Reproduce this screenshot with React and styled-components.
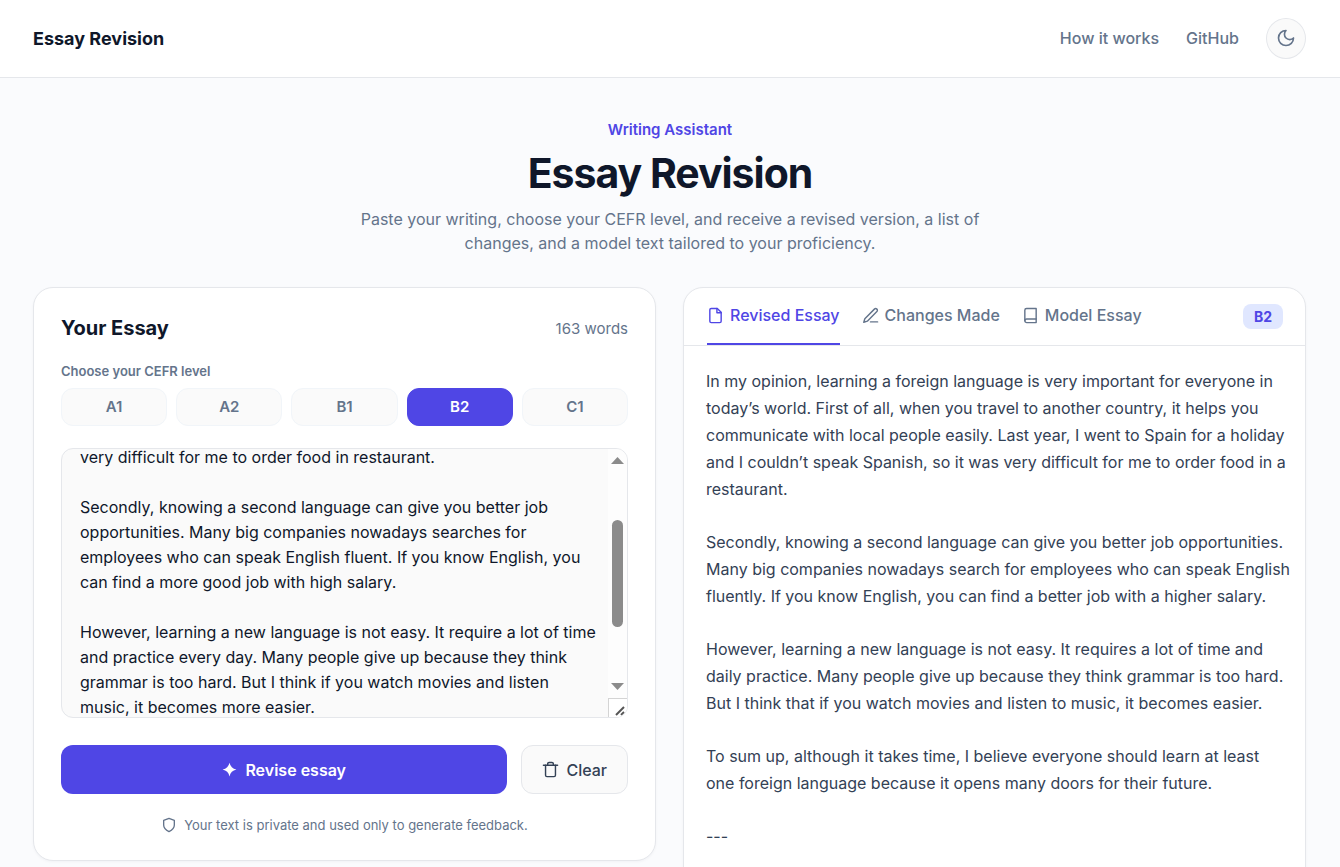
import React, { useEffect, useRef, useState } from "react";
import styled, { createGlobalStyle } from 'styled-components'

const levels = ['A1', 'A2', 'B1', 'B2', 'C1'];

const essayText = `In my opinion, learning a foreign language is very important for everyone in today’s world. First of all, when you travel to another country, it helps you to communicate with local people easy. Last year, I go to Spain for holiday and I can’t speak Spanish, so it was very difficult for me to order food in restaurant.

Secondly, knowing a second language can give you better job opportunities. Many big companies nowadays searches for employees who can speak English fluent. If you know English, you can find a more good job with high salary.

However, learning a new language is not easy. It require a lot of time and practice every day. Many people give up because they think grammar is too hard. But I think if you watch movies and listen music, it becomes more easier.

To sum up, although it takes time, I believe everyone should learn at least one foreign language because it open many doors for their future and also for their career.`;

const revisedText = [
    `In my opinion, learning a foreign language is very important for everyone in today’s world. First of all, when you travel to another country, it helps you communicate with local people easily. Last year, I went to Spain for a holiday and I couldn’t speak Spanish, so it was very difficult for me to order food in a restaurant.`,
    `Secondly, knowing a second language can give you better job opportunities. Many big companies nowadays search for employees who can speak English fluently. If you know English, you can find a better job with a higher salary.`,
    `However, learning a new language is not easy. It requires a lot of time and daily practice. Many people give up because they think grammar is too hard. But I think that if you watch movies and listen to music, it becomes easier.`,
    `To sum up, although it takes time, I believe everyone should learn at least\none foreign language because it opens many doors for their future.`,
    `---`,
];

const MoonIcon = () => (
    <Icon $size={20} viewBox="0 0 24 24">
        <path d="M12 3a6 6 0 0 0 9 9 9 9 0 1 1-9-9Z" />
    </Icon>
)

const FileIcon = () => (
    <Icon $size={17} viewBox="0 0 24 24">
        <path d="M14.5 2H6a2 2 0 0 0-2 2v16a2 2 0 0 0 2 2h12a2 2 0 0 0 2-2V7.5L14.5 2z" />
        <path d="M14 2v6h6" />
    </Icon>
)

const PenIcon = () => (
    <Icon $size={17} viewBox="0 0 24 24">
        <path d="M12 21h10" />
        <path d="M17.500 3a2.300 2.300 0 0 1 3.500 3.500L7.500 20l-5 1.500 1.500-5Z" />
    </Icon>
)

const BookIcon = () => (
    <Icon $size={17} viewBox="0 0 24 24">
        <path d="M4 19.5A2.5 2.5 0 0 1 6.5 17H20" />
        <path d="M6.5 2H20v20H6.5A2.5 2.5 0 0 1 4 19.5v-15A2.5 2.5 0 0 1 6.5 2z" />
    </Icon>
)

const TrashIcon = () => (
    <Icon $size={17} viewBox="0 0 24 24">
        <path d="M2 6h20" />
        <path d="M19 6v14a2 2 0 0 1-2 2H7a2 2 0 0 1-2-2V6" />
        <path d="M8 6V4a2 2 0 0 1 2-2h4a2 2 0 0 1 2 2v2" />
    </Icon>
)

const ShieldIcon = () => (
    <Icon $size={16} viewBox="0 0 24 24">
        <path d="M12 22s8-4 8-10V5l-8-3-8 3v7c0 6 8 10 8 10z" />
    </Icon>
)

const SparkIcon = () => (
    <SolidIcon width="15" height="15" viewBox="0 0 24 24">
        <path d="M12 1Q14 10 23 12Q14 14 12 23Q10 14 1 12Q10 10 12 1Z" />
    </SolidIcon>
)

const GripIcon = () => (
    <Grip viewBox="0 0 18 18">
        <path d="M7 16l8-8" />
        <path d="M12 16l3-3" />
    </Grip>
)

const tabs = [
    { id: 'revised', label: 'Revised Essay', icon: <FileIcon /> },
    { id: 'changes', label: 'Changes Made', icon: <PenIcon /> },
    { id: 'model', label: 'Model Essay', icon: <BookIcon /> },
];

function EssayEditor({ value, onChange }) {

    const inputRef = useRef(null);
    const [thumb, setThumb] = useState({ top: 0, size: 100 });

    const updateThumb = () => {
        const { scrollTop, scrollHeight, clientHeight } = inputRef.current;
        setThumb({
            top: scrollTop / scrollHeight * 100,
            size: clientHeight / scrollHeight * 100,
        });
    };

    useEffect(() => {
        inputRef.current.scrollTop = 122;
    }, []);

    useEffect(updateThumb, [value]);

    return (
        <Editor>
            <EssayInput
                ref={inputRef}
                aria-labelledby="essay-title"
                spellCheck={false}
                value={value}
                onChange={e => onChange(e.target.value)}
                onScroll={updateThumb}
            />
            <Rail aria-hidden="true">
                <Arrow viewBox="0 0 19 23"><path d="M3 15l6.5-7 6.5 7z" /></Arrow>
                <Track style={{ gridTemplateRows: `${thumb.top}% ${thumb.size}%` }}>
                    <Thumb />
                </Track>
                <Arrow viewBox="0 0 19 23"><path d="M3 8l6.5 7 6.5-7z" /></Arrow>
                <Corner><GripIcon /></Corner>
            </Rail>
        </Editor>
    )
}

function App() {

    const [level, setLevel] = useState('B2');
    const [tab, setTab] = useState('revised');
    const [essay, setEssay] = useState(essayText);

    return (
        <>
            <GlobalStyle />
            <Header>
                <Brand>Essay Revision</Brand>
                <Nav>
                    <NavLink href="#how">How it works</NavLink>
                    <NavLink href="#github">GitHub</NavLink>
                    <ThemeButton type="button" aria-label="Toggle dark mode"><MoonIcon /></ThemeButton>
                </Nav>
            </Header>

            <Hero>
                <Eyebrow>Writing Assistant</Eyebrow>
                <Title>Essay Revision</Title>
                <Intro>
                    Paste your writing, choose your CEFR level, and receive a revised version, a list of
                    changes, and a model text tailored to your proficiency.
                </Intro>
            </Hero>

            <Columns>
                <EssayCard>
                    <CardHeader>
                        <CardTitle id="essay-title">Your Essay</CardTitle>
                        <WordCount>163 words</WordCount>
                    </CardHeader>

                    <LevelLabel id="level-label">Choose your CEFR level</LevelLabel>
                    <Levels role="group" aria-labelledby="level-label">
                        {levels.map(item => (
                            <LevelButton
                                key={item}
                                type="button"
                                $active={item === level}
                                aria-pressed={item === level}
                                onClick={() => setLevel(item)}
                            >
                                {item}
                            </LevelButton>
                        ))}
                    </Levels>

                    <EssayEditor value={essay} onChange={setEssay} />

                    <Actions>
                        <ReviseButton type="button"><SparkIcon />Revise essay</ReviseButton>
                        <ClearButton type="button" onClick={() => setEssay('')}><TrashIcon />Clear</ClearButton>
                    </Actions>

                    <Privacy><ShieldIcon />Your text is private and used only to generate feedback.</Privacy>
                </EssayCard>

                <Card>
                    <TabBar>
                        <TabList role="tablist">
                            {tabs.map(item => (
                                <Tab
                                    key={item.id}
                                    type="button"
                                    role="tab"
                                    $active={item.id === tab}
                                    aria-selected={item.id === tab}
                                    onClick={() => setTab(item.id)}
                                >
                                    {item.icon}{item.label}
                                </Tab>
                            ))}
                        </TabList>
                        <Badge>{level}</Badge>
                    </TabBar>
                    <Result>
                        {revisedText.map(text => <p key={text}>{text}</p>)}
                    </Result>
                </Card>
            </Columns>
        </>
    )
}

const GlobalStyle = createGlobalStyle`
    *, *::before, *::after {
        box-sizing: border-box;
    }
    body {
        margin: 0;
        background: #fafbfd;
        color: #0f172a;
        font-family: Inter, "Liberation Sans", sans-serif;
        font-size: 16px;
    }
    h1, h2, p {
        margin: 0;
    }
    button, textarea {
        font-family: inherit;
    }
    button {
        cursor: pointer;
    }
`
const Icon = styled.svg`
    width: ${({ $size }) => $size}px;
    height: ${({ $size }) => $size}px;
    flex: none;
    fill: none;
    stroke: currentColor;
    stroke-width: 2;
    stroke-linecap: round;
    stroke-linejoin: round;
`
const SolidIcon = styled.svg`
    flex: none;
    fill: currentColor;
`
const Header = styled.header`
    display: flex;
    justify-content: space-between;
    align-items: center;
    padding: 18px 34px 18px 33px;
    background: #ffffff;
    border-bottom: 1px solid #e5e7eb;
`
const Brand = styled.div`
    font-size: 18px;
    font-weight: 700;
`
const Nav = styled.nav`
    display: flex;
    align-items: center;
    gap: 27px;
`
const NavLink = styled.a`
    color: #64748b;
    font-size: 16px;
    font-weight: 500;
    line-height: 20px;
    padding-bottom: 1px;
    text-decoration: none;
`
const ThemeButton = styled.button`
    display: flex;
    align-items: center;
    justify-content: center;
    width: 40px;
    height: 41px;
    padding: 0 0 2px;
    border: 1px solid #e5e7eb;
    border-radius: 50%;
    background: #fafafa;
    color: #64748b;
`
const Hero = styled.section`
    display: flex;
    flex-direction: column;
    align-items: center;
    padding: 41px 34px 32px;
    text-align: center;
`
const Eyebrow = styled.p`
    color: #4f46e5;
    font-size: 15px;
    font-weight: 600;
    line-height: 22px;
`
const Title = styled.h1`
    margin-top: 7px;
    font-size: 41px;
    font-weight: 700;
    line-height: 50px;
    letter-spacing: -0.025em;
`
const Intro = styled.p`
    max-width: 646px;
    margin-top: 9px;
    color: #64748b;
    font-size: 16px;
    line-height: 24px;
`
const Columns = styled.main`
    display: grid;
    grid-template-columns: repeat(2, minmax(0, 1fr));
    align-items: start;
    gap: 27px;
    padding: 0 34px 0 33px;
`
const Card = styled.section`
    background: #ffffff;
    border: 1px solid #e5e7eb;
    border-radius: 20px;
    box-shadow: 0 1px 3px rgba(15, 23, 42, 0.04);
`
const EssayCard = styled(Card)`
    padding: 27px 27px 25px;
`
const CardHeader = styled.div`
    display: flex;
    justify-content: space-between;
    align-items: center;
`
const CardTitle = styled.h2`
    font-size: 20px;
    font-weight: 700;
    line-height: 26px;
`
const WordCount = styled.span`
    color: #64748b;
    font-size: 15px;
`
const LevelLabel = styled.p`
    margin-top: 20px;
    color: #64748b;
    font-size: 13px;
    font-weight: 600;
    line-height: 20px;
`
const Levels = styled.div`
    display: grid;
    grid-template-columns: repeat(5, 1fr);
    gap: 9px;
    margin-top: 7px;
`
const LevelButton = styled.button`
    height: 38px;
    padding: 0 0 2px;
    border: 1px solid ${({ $active }) => ($active ? '#4f46e5' : '#f1f5f9')};
    border-radius: 12px;
    background: ${({ $active }) => ($active ? '#4f46e5' : '#fafafa')};
    color: ${({ $active }) => ($active ? '#ffffff' : '#64748b')};
    font-size: 15px;
    font-weight: 600;
`
const Editor = styled.div`
    display: flex;
    height: 270px;
    margin-top: 22px;
    overflow: hidden;
    border: 1px solid #e5e7eb;
    border-radius: 12px;
    background: #fafafa;
`
const EssayInput = styled.textarea`
    flex: 1;
    min-width: 0;
    padding: 18px 10px 18px 18px;
    border: none;
    outline: none;
    background: transparent;
    color: #0f172a;
    font-size: 16px;
    line-height: 25px;
    resize: none;
    scrollbar-width: none;
`
const Rail = styled.div`
    display: flex;
    flex-direction: column;
    flex: none;
    width: 19px;
    background: #fdfdfd;
`
const Arrow = styled.svg`
    flex: none;
    width: 19px;
    height: 23px;
    fill: #8b8b8b;
`
const Track = styled.div`
    display: grid;
    flex: 1;
    padding: 0 4px;
`
const Thumb = styled.div`
    grid-row: 2;
    border-radius: 6px;
    background: #8b8b8b;
`
const Corner = styled.div`
    flex: none;
    height: 19px;
    border-top: 1px solid #d4d4d4;
    border-left: 1px solid #d4d4d4;
    background: #ffffff;
`
const Grip = styled.svg`
    display: block;
    width: 18px;
    height: 18px;
    stroke: #555555;
    stroke-width: 2;
`
const Actions = styled.div`
    display: flex;
    gap: 14px;
    margin-top: 27px;
`
const ActionButton = styled.button`
    display: flex;
    align-items: center;
    justify-content: center;
    gap: 8px;
    height: 49px;
    border-radius: 12px;
    font-size: 16px;
`
const ReviseButton = styled(ActionButton)`
    flex: 1;
    border: none;
    background: #4f46e5;
    color: #ffffff;
    font-weight: 600;
`
const ClearButton = styled(ActionButton)`
    gap: 7px;
    padding: 0 20px;
    border: 1px solid #e5e7eb;
    background: #fafafa;
    color: #334155;
    font-weight: 500;
`
const Privacy = styled.p`
    display: flex;
    align-items: center;
    justify-content: center;
    gap: 7px;
    margin-top: 21px;
    color: #64748b;
    font-size: 13px;
    line-height: 20px;
`
const TabBar = styled.div`
    display: flex;
    justify-content: space-between;
    align-items: center;
    padding: 0 22px 0 23px;
    border-bottom: 1px solid #e5e7eb;
`
const TabList = styled.div`
    display: flex;
    gap: 22px;
`
const Tab = styled.button`
    display: flex;
    align-items: center;
    gap: 6px;
    height: 57px;
    padding: 0 0 1px;
    border: none;
    border-bottom: 2px solid ${({ $active }) => ($active ? '#4f46e5' : 'transparent')};
    background: none;
    color: ${({ $active }) => ($active ? '#4f46e5' : '#64748b')};
    font-size: 16px;
    font-weight: 500;
`
const Badge = styled.span`
    padding: 0 11px;
    border-radius: 8px;
    background: #e0e7ff;
    color: #4f46e5;
    font-size: 14px;
    font-weight: 700;
    line-height: 25px;
`
const Result = styled.div`
    display: flex;
    flex-direction: column;
    gap: 26px;
    padding: 22px 12px 40px 22px;
    color: #334155;
    font-size: 16px;
    line-height: 27px;
    white-space: pre-line;
`

export default App;
